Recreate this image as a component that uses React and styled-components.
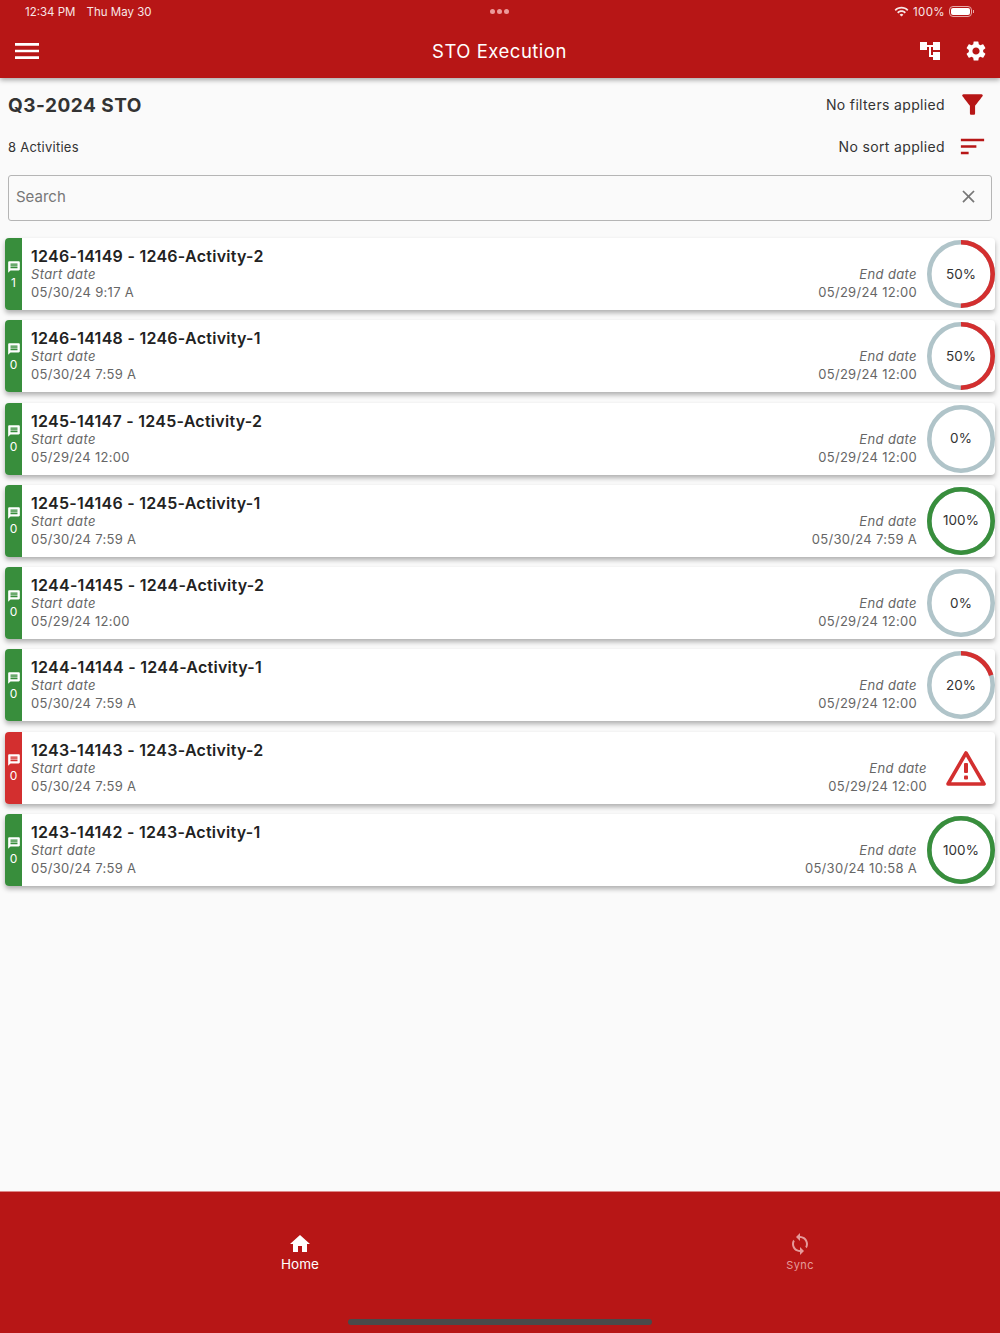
import React from "react";
import styled, { createGlobalStyle } from "styled-components";
import {
  MdMenu,
  MdAccountTree,
  MdSettings,
  MdFilterAlt,
  MdSort,
  MdClose,
  MdMessage,
  MdHome,
  MdSync,
  MdWifi,
} from "react-icons/md";

const RED = "#b71616";

const GlobalStyle = createGlobalStyle`
  html, body {
    margin: 0;
    padding: 0;
    background: #fafafa;
    font-family: Inter, Roboto, "Liberation Sans", sans-serif;
  }
`;

const Page = styled.div`
  width: 1000px;
  height: 1333px;
  display: flex;
  flex-direction: column;
  overflow: hidden;
  background: #fafafa;
`;

const Header = styled.header`
  height: 78px;
  flex-shrink: 0;
  background: ${RED};
  color: #fff;
  box-shadow: 0 2px 5px rgba(0, 0, 0, 0.35);
  position: relative;
  z-index: 1;
`;

const StatusBar = styled.div`
  height: 24px;
  padding: 0 28px 1px 25px;
  box-sizing: border-box;
  display: grid;
  grid-template-columns: 1fr auto 1fr;
  align-items: center;
  font-size: 11.5px;
  color: #f8e6e6;
`;

const StatusLeft = styled.div`
  display: flex;
  gap: 11px;
`;

const Dots = styled.div`
  display: flex;
  gap: 2px;
  margin-left: 2px;

  i {
    width: 5px;
    height: 5px;
    border-radius: 50%;
    background: #ec9a9a;
  }
`;

const StatusRight = styled.div`
  display: flex;
  justify-content: flex-end;
  align-items: center;
  gap: 4px;
  letter-spacing: 0.4px;
`;

const Battery = styled.div`
  width: 23px;
  height: 11px;
  box-sizing: border-box;
  border: 1px solid #e8a8a8;
  border-radius: 4px;
  padding: 1px;
  position: relative;

  &::before {
    content: "";
    display: block;
    height: 100%;
    background: #fff;
    border-radius: 2px;
  }

  &::after {
    content: "";
    position: absolute;
    right: -3px;
    top: 3px;
    width: 1px;
    height: 3px;
    background: #e8a8a8;
  }
`;

const TopBar = styled.div`
  height: 54px;
  padding: 0 12px 0 11px;
  box-sizing: border-box;
  display: grid;
  grid-template-columns: 1fr auto 1fr;
  align-items: center;
`;

const AppTitle = styled.h1`
  margin: 0;
  font-size: 18.5px;
  font-weight: 400;
  letter-spacing: 0.5px;
`;

const TopActions = styled.div`
  display: flex;
  justify-content: flex-end;
  align-items: center;
  gap: 22px;
`;

const Content = styled.main`
  flex: 1;
  min-height: 0;
  padding: 0 5px;
`;

const InfoRow = styled.div`
  height: ${(p) => p.$height}px;
  padding: 0 7px 0 3px;
  display: flex;
  align-items: center;
  justify-content: space-between;
  color: #333;
`;

const PlanName = styled.h2`
  margin: 1px 0 0;
  font-size: 19px;
  font-weight: 700;
  letter-spacing: 0.5px;
  color: #333;
`;

const Count = styled.span`
  margin-top: 1px;
  font-size: 13px;
  letter-spacing: 0.25px;
`;

const InfoRight = styled.div`
  display: flex;
  align-items: center;
  gap: 12px;
  font-size: 14px;
  letter-spacing: 0.35px;
  color: #333;
  svg {
    color: ${RED};
  }
`;

const SearchBox = styled.div`
  height: 46px;
  box-sizing: border-box;
  margin: 14px 3px 17px;
  padding: 0 12px 3px 7px;
  display: flex;
  align-items: center;
  justify-content: space-between;
  border: 1px solid #b5b5b5;
  border-radius: 3px;
  font-size: 15px;
  color: #777;
`;

const List = styled.div`
  display: flex;
  flex-direction: column;
  gap: 10.3px;
`;

const Card = styled.article`
  height: 72px;
  display: flex;
  align-items: stretch;
  background: #fff;
  border-radius: 4px;
  box-shadow: 0 3px 5px rgba(0, 0, 0, 0.3);
`;

const Badge = styled.div`
  width: 17px;
  flex-shrink: 0;
  display: flex;
  flex-direction: column;
  align-items: center;
  justify-content: center;
  gap: 1px;
  padding-top: 1px;
  box-sizing: border-box;
  border-radius: 4px 0 0 4px;
  background: ${(p) => (p.$alert ? "#d32f2f" : "#388e3c")};
  color: #fff;
  font-size: 12px;
`;

const Body = styled.div`
  flex: 1;
  display: flex;
  justify-content: space-between;
  padding-left: 9px;
  min-width: 0;
`;

const Info = styled.div`
  display: flex;
  flex-direction: column;
  padding-top: 10px;
`;

const Name = styled.div`
  font-size: 16px;
  line-height: 17px;
  font-weight: 600;
  letter-spacing: 0.27px;
  color: #222;
`;

const Label = styled.div`
  font-size: 13px;
  line-height: 18px;
  font-style: italic;
  letter-spacing: 0.38px;
  color: #666;
`;

const DateText = styled.div`
  font-size: 13px;
  line-height: 18px;
  letter-spacing: 0.3px;
  color: #666;
`;

const EndCol = styled.div`
  display: flex;
  flex-direction: column;
  align-items: flex-end;
  padding-top: 27px;
`;

const Right = styled.div`
  display: flex;
  align-items: flex-start;
  gap: ${(p) => (p.$alert ? "17px" : "10px")};
  padding-right: ${(p) => (p.$alert ? "7px" : "0")};
`;

const RingWrap = styled.div`
  width: 68px;
  height: 68px;
  margin-top: 2px;
  padding-bottom: 1px;
  box-sizing: border-box;
  position: relative;
  display: flex;
  align-items: center;
  justify-content: center;
  font-size: 13.5px;
  color: #333;

  svg {
    position: absolute;
    inset: 0;
  }
`;

const AlertIcon = styled.svg`
  width: 44px;
  height: 72px;
  color: #d32f2f;
`;

const BottomNav = styled.nav`
  height: 142px;
  flex-shrink: 0;
  background: ${RED};
  border-top: 1px solid #d88;
  box-sizing: border-box;
  position: relative;
  display: grid;
  grid-template-columns: 3fr 2fr;
`;

const NavItem = styled.div`
  height: 81px;
  padding-top: 40px;
  display: flex;
  flex-direction: column;
  align-items: center;
  justify-content: flex-start;
  color: ${(p) => (p.$active ? "#fff" : "#e59a9a")};
  font-size: ${(p) => (p.$active ? "13.5px" : "11px")};
  letter-spacing: ${(p) => (p.$active ? "0" : "0.4px")};
`;

const NavLabel = styled.span`
  line-height: 16px;
  margin-top: ${(p) => (p.$active ? "0" : "1px")};
`;

const HomeBar = styled.div`
  position: absolute;
  left: 348px;
  bottom: 8px;
  width: 304px;
  height: 6px;
  border-radius: 3px;
  background: #4a4a4a;
`;

const activities = [
  { name: "1246-14149 - 1246-Activity-2", start: "05/30/24 9:17 A", end: "05/29/24 12:00", pct: 50, comments: 1 },
  { name: "1246-14148 - 1246-Activity-1", start: "05/30/24 7:59 A", end: "05/29/24 12:00", pct: 50, comments: 0 },
  { name: "1245-14147 - 1245-Activity-2", start: "05/29/24 12:00", end: "05/29/24 12:00", pct: 0, comments: 0 },
  { name: "1245-14146 - 1245-Activity-1", start: "05/30/24 7:59 A", end: "05/30/24 7:59 A", pct: 100, comments: 0 },
  { name: "1244-14145 - 1244-Activity-2", start: "05/29/24 12:00", end: "05/29/24 12:00", pct: 0, comments: 0 },
  { name: "1244-14144 - 1244-Activity-1", start: "05/30/24 7:59 A", end: "05/29/24 12:00", pct: 20, comments: 0 },
  { name: "1243-14143 - 1243-Activity-2", start: "05/30/24 7:59 A", end: "05/29/24 12:00", alert: true, comments: 0 },
  { name: "1243-14142 - 1243-Activity-1", start: "05/30/24 7:59 A", end: "05/30/24 10:58 A", pct: 100, comments: 0 },
];

function Ring({ pct }) {
  const r = 31.7;
  const c = 2 * Math.PI * r;
  const color = pct === 100 ? "#388e3c" : "#d32f2f";
  return (
    <RingWrap>
      <svg width="68" height="68" viewBox="0 0 68 68">
        <circle cx="34" cy="34" r={r} fill="none" stroke="#b0c4c9" strokeWidth="4.6" />
        {pct > 0 && (
          <circle
            cx="34"
            cy="34"
            r={r}
            fill="none"
            stroke={color}
            strokeWidth="4.6"
            strokeDasharray={`${(c * pct) / 100} ${c}`}
            transform="rotate(-90 34 34)"
          />
        )}
      </svg>
      {pct}%
    </RingWrap>
  );
}

function WarningIcon() {
  return (
    <AlertIcon viewBox="0 0 44 72">
      <path
        d="M22 21 L40 52 H4 Z"
        fill="none"
        stroke="currentColor"
        strokeWidth="3.6"
        strokeLinejoin="round"
      />
      <rect x="20" y="31" width="4" height="10" rx="1" fill="currentColor" />
      <rect x="20" y="43.5" width="4" height="4" rx="1" fill="currentColor" />
    </AlertIcon>
  );
}

function ActivityCard({ item }) {
  return (
    <Card>
      <Badge $alert={item.alert}>
        <MdMessage size={14} />
        {item.comments}
      </Badge>
      <Body>
        <Info>
          <Name>{item.name}</Name>
          <Label>Start date</Label>
          <DateText>{item.start}</DateText>
        </Info>
        <Right $alert={item.alert}>
          <EndCol>
            <Label>End date</Label>
            <DateText>{item.end}</DateText>
          </EndCol>
          {item.alert ? <WarningIcon /> : <Ring pct={item.pct} />}
        </Right>
      </Body>
    </Card>
  );
}

export default function App() {
  return (
    <Page>
      <GlobalStyle />
      <Header>
        <StatusBar>
          <StatusLeft>
            <span>12:34 PM</span>
            <span>Thu May 30</span>
          </StatusLeft>
          <Dots>
            <i />
            <i />
            <i />
          </Dots>
          <StatusRight>
            <MdWifi size={15} />
            <span>100%</span>
            <Battery />
          </StatusRight>
        </StatusBar>
        <TopBar>
          <MdMenu size={32} />
          <AppTitle>STO Execution</AppTitle>
          <TopActions>
            <MdAccountTree size={24} />
            <MdSettings size={24} />
          </TopActions>
        </TopBar>
      </Header>
      <Content>
        <InfoRow $height={53}>
          <PlanName>Q3-2024 STO</PlanName>
          <InfoRight>
            No filters applied
            <MdFilterAlt size={31} />
          </InfoRight>
        </InfoRow>
        <InfoRow $height={30}>
          <Count>8 Activities</Count>
          <InfoRight>
            No sort applied
            <MdSort size={31} />
          </InfoRight>
        </InfoRow>
        <SearchBox>
          Search
          <MdClose size={21} color="#777" />
        </SearchBox>
        <List>
          {activities.map((item) => (
            <ActivityCard key={item.name} item={item} />
          ))}
        </List>
      </Content>
      <BottomNav>
        <NavItem $active>
          <MdHome size={24} />
          <NavLabel $active>Home</NavLabel>
        </NavItem>
        <NavItem>
          <MdSync size={24} />
          <NavLabel>Sync</NavLabel>
        </NavItem>
        <HomeBar />
      </BottomNav>
    </Page>
  );
}
